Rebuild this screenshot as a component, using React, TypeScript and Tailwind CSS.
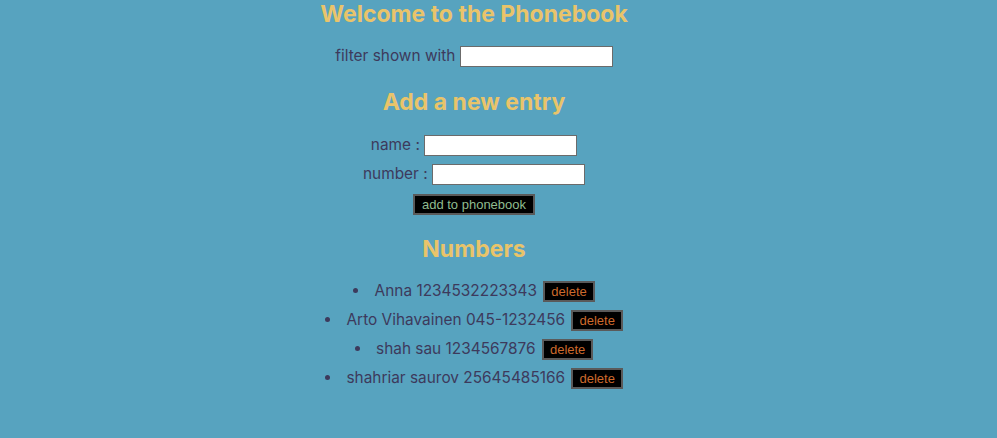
import React, { useState } from "react";

interface Person {
  id: number;
  name: string;
  number: string;
}

const INITIAL: Person[] = [
  { id: 1, name: "Anna", number: "1234532223343" },
  { id: 2, name: "Arto Vihavainen", number: "045-1232456" },
  { id: 3, name: "shah sau", number: "1234567876" },
  { id: 4, name: "shahriar saurov", number: "25645485166" },
];

const inputCls =
  "w-[153px] h-[21px] bg-white border border-[#6b6b6b] px-1 text-[13px] text-black outline-none align-middle";

const btnCls =
  "bg-black border-2 border-[#5a5a5a] font-['Liberation_Sans',Arial,sans-serif] text-[13px] leading-none align-middle";

export default function App() {
  const [persons, setPersons] = useState<Person[]>(INITIAL);
  const [filter, setFilter] = useState("");
  const [name, setName] = useState("");
  const [number, setNumber] = useState("");

  const add = (e: React.FormEvent) => {
    e.preventDefault();
    if (!name) return;
    setPersons([...persons, { id: Date.now(), name, number }]);
    setName("");
    setNumber("");
  };

  const shown = persons.filter(p => p.name.toLowerCase().includes(filter.toLowerCase()));

  return (
    <div className="min-h-[438px] bg-[#57a3bf] font-['Inter',sans-serif] text-[#3d3a5c] text-[15.4px]">
      <div className="w-[948px] flex flex-col items-center text-center">
        <h1 className="text-[23px] leading-[28px] font-bold text-[#e9c46a]">Welcome to the Phonebook</h1>

        <div className="mt-[16px] h-[24px] flex items-center">
          filter shown with&nbsp;
          <input className={inputCls} value={filter} onChange={e => setFilter(e.target.value)} />
        </div>

        <h2 className="mt-[20px] text-[23px] leading-[28px] font-bold text-[#e9c46a]">Add a new entry</h2>

        <form onSubmit={add} className="flex flex-col items-center">
          <div className="mt-[17px] h-[24px] flex items-center">
            name :&nbsp;
            <input className={inputCls} value={name} onChange={e => setName(e.target.value)} />
          </div>
          <div className="mt-[5px] h-[24px] flex items-center">
            number :&nbsp;
            <input className={inputCls} value={number} onChange={e => setNumber(e.target.value)} />
          </div>
          <button type="submit" className={`${btnCls} mt-[8px] h-[21px] px-[7px] text-[#8fbc8f]`}>
            add to phonebook
          </button>
        </form>

        <h2 className="mt-[20px] text-[23px] leading-[28px] font-bold text-[#e9c46a]">Numbers</h2>

        <ul className="mt-[13px] list-disc list-inside">
          {shown.map(p => (
            <li key={p.id} className="h-[29px] leading-[29px]">
              {p.name} {p.number}{" "}
              <button
                className={`${btnCls} ml-[2px] h-[21px] px-[6px] text-[#cd6a2c]`}
                onClick={() => setPersons(persons.filter(x => x.id !== p.id))}
              >
                delete
              </button>
            </li>
          ))}
        </ul>
      </div>
    </div>
  );
}
